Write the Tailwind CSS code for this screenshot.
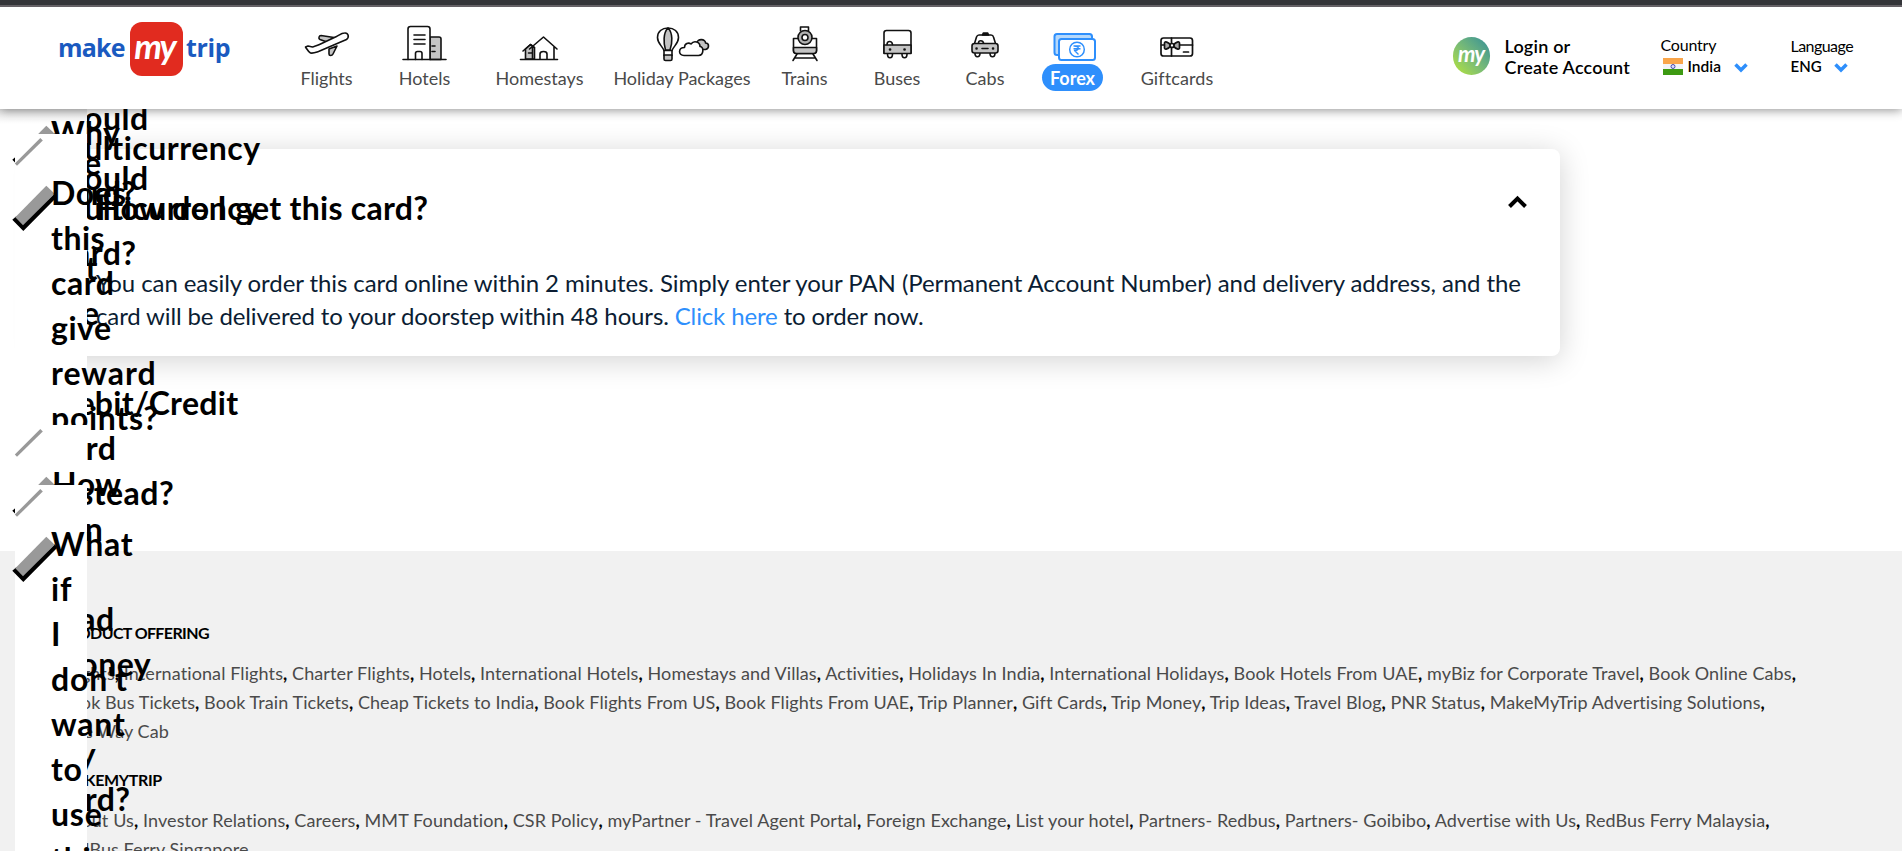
<!DOCTYPE html>
<html lang="en"><head><meta charset="utf-8"><title>MakeMyTrip Forex</title>
<script src="https://cdn.jsdelivr.net/npm/@tailwindcss/browser@4"></script></head>
<body class="font-['Lato',sans-serif] bg-white text-black">
<div class="relative w-[1902px] h-[851px] overflow-hidden">

<header class="relative z-30 h-[109px] bg-white border-t-5 border-[#343539] shadow-[0_1px_10px_rgba(0,0,0,0.45)]">
 <div class="h-[2px] bg-[#656166]"></div>
 <div class="flex h-[102px]">
  <div class="flex w-[240px] shrink-0 pl-[58px] pt-[15px] font-['Open_Sans',sans-serif] font-bold text-[25px] leading-[50px] text-[#1a5ac0]">
   <span class="w-[72px] tracking-[-0.8px]">make</span>
   <span class="w-[53px] h-[54px] rounded-[12px] bg-[#e12b1f] text-white text-center italic font-['Lato',sans-serif] text-[35px] leading-[46px] tracking-[-2px] pr-1">my</span>
   <span class="pl-[3px] tracking-[-0.4px]">trip</span>
  </div>
  <nav class="flex gap-[46px] pl-[60px] pt-[17px] text-[18px] text-[#4a4a4a] leading-[29px]">
   <div class="flex flex-col items-center w-[53px] whitespace-nowrap">
    <svg class="w-[46px] h-[40px] shrink-0" viewBox="304 24 46 40" fill="none" stroke="#111" stroke-width="1.6" stroke-linejoin="round" stroke-linecap="round"><path fill="#c4c4c4" d="M327 42l-7-2.500c-2-1-1-4 1-4l13 2zM329 49l8-3-4 8c-1 2-4 2-4 0z"/><path fill="#fff" d="M308 46l-2.500 1c2 3 3 5 5 6 3 .5 5-.5 8-1.500l28-12c3-2 2-7-2-6.500-3 0-5 2-8 3.500l-17 8c-2 1-4 1.500-7 2.500z"/></svg>
    <span>Flights</span></div>
   <div class="flex flex-col items-center w-[51px] whitespace-nowrap">
    <svg class="w-[46px] h-[40px] shrink-0" viewBox="402 24 46 40" fill="none" stroke="#111" stroke-width="1.6" stroke-linejoin="round" stroke-linecap="round"><path fill="#c4c4c4" d="M430 37h9q2 0 2 2v20.500h-11z"/><path fill="#fff" d="M408 59.500V29q0-2.500 2.500-2.500h17q2.500 0 2.500 2.500v30.500M415.500 59.500v-6q0-2 2-2h2.500q2 0 2 2v6"/><path d="M403 59.500h43M414 35h11M414 39.500h11M414 44h11M432 46h3M432 51.500h3"/></svg>
    <span>Hotels</span></div>
   <div class="flex flex-col items-center w-[87px] whitespace-nowrap">
    <svg class="w-[46px] h-[40px] shrink-0" viewBox="516.500 24 46 40" fill="none" stroke="#111" stroke-width="1.600" stroke-linejoin="round" stroke-linecap="round"><path fill="#c4c4c4" d="M525 59V49l5-4.500 4 3.500v11z"/><path d="M522.500 51l7.500-6.500 4 3M529 49l14-12 13.500 12M532 47v12M553.500 47v12.500M539.500 59v-5q0-2.500 3.500-2.500t3.500 2.500v5M528 53h3M520 59.500h37"/></svg>
    <span>Homestays</span></div>
   <div class="flex flex-col items-center w-[138px] -mx-4 whitespace-nowrap">
    <svg class="w-[56px] h-[40px] shrink-0" viewBox="654 24 56 40" fill="none" stroke="#111" stroke-width="1.6" stroke-linejoin="round" stroke-linecap="round"><path d="M664 50.500c-2-5-6.500-7-6.500-13 0-6 4.500-9.500 10.500-9.500s10.500 3.500 10.500 9.500c0 6-4.500 8-6.500 13z"/><path fill="#c4c4c4" d="M665.500 50c-2-7-2.500-17 2.500-22 5 5 4.500 15 2 22zM664 55h8v4q0 1.500-1.500 1.500h-5q-1.500 0-1.500-1.500zM697 43c0-5 9-4 8.500 0 4 0 4 5.500 0 6.500h-3z"/><path d="M664 50.500v5M672 50.500v5"/><path fill="#fff" d="M684 55.500c-6 0-6-8 .5-8 0-4 4-5.500 6.500-3.500 3-4 9-2 9 2.500 4 .5 4 9-1.500 9z"/></svg>
    <span>Holiday Packages</span></div>
   <div class="flex flex-col items-center w-[47px] whitespace-nowrap">
    <svg class="w-[46px] h-[40px] shrink-0" viewBox="781.500 24 46 40" fill="none" stroke="#111" stroke-width="1.6" stroke-linejoin="round" stroke-linecap="round"><path d="M800 31v-4h8v4M797 38.500h-4v12q0 3 3 3h17q3 0 3-3v-12h-4"/><path fill="#c4c4c4" d="M793 47.500h23v3q0 3-3 3h-17q-3 0-3-3z"/><circle cx="804.500" cy="37.500" r="7" fill="#b0b0b0"/><circle cx="804.500" cy="37.500" r="3" fill="#fff"/><path d="M796.500 54l-4 6.500M812.500 54l4 6.500M795 58h19"/></svg>
    <span>Trains</span></div>
   <div class="flex flex-col items-center w-[46px] whitespace-nowrap">
    <svg class="w-[46px] h-[40px] shrink-0" viewBox="874 24 46 40" fill="none" stroke="#111" stroke-width="1.6" stroke-linejoin="round" stroke-linecap="round"><path fill="#fff" d="M887.500 54c0 5 5 5 5 0M902 54c0 5 5 5 5 0M884 53V33q0-2.500 2.500-2.500h22q2.500 0 2.500 2.500v20z"/><path fill="#c4c4c4" d="M884 45h27v8.500h-27z"/><path d="M887 44.500c0-4 5-4 5.500 0"/><path stroke-width="2.600" d="M890 49.500h.1M904.500 49.500h.1"/></svg>
    <span>Buses</span></div>
   <div class="flex flex-col items-center w-[38px] whitespace-nowrap">
    <svg class="w-[38px] h-[40px] shrink-0" viewBox="966.500 24 38 40" fill="none" stroke="#111" stroke-width="1.600" stroke-linejoin="round" stroke-linecap="round"><path fill="#fff" d="M975.500 53c-.5 5 5 5 5 0M990.500 53c0 5 5 5 5 0M975 43.500l2-6.500q.7-2 2.500-2h12q2 0 2.500 2l2 6.500"/><path fill="#c4c4c4" d="M975 43.500h21q2.500 0 2.500 2.500v4.500q0 2.500-2.500 2.500h-21q-2.500 0-2.500-2.500V46q0-2.500 2.500-2.500z"/><path d="M979 43c0-3 4.500-3 5 0M982.500 48.500h6"/><path stroke-width="2.500" d="M977 48.500h.1M993.500 48.500h.1"/><path fill="#111" d="M983 35l.8-2h4.400l.8 2z"/></svg>
    <span>Cabs</span></div>
   <div class="flex flex-col items-center w-[61px] -mx-2 whitespace-nowrap">
    <svg class="w-[46px] h-[40px] shrink-0" viewBox="1048.500 24 46 40" fill="none" stroke="#2e8ffc" stroke-width="2" stroke-linejoin="round"><rect x="1053" y="34" width="37.500" height="21" rx="2.500" fill="#b5d8fb"/><rect x="1057.500" y="39" width="36" height="21" rx="2.500" fill="#fff"/><circle cx="1075.500" cy="49.500" r="7.300" stroke-width="1.500"/><path stroke-width="1.400" d="M1072 46h7M1072 48.700h7M1073 46c5 0 5 4.500 0 4.500l4 4"/></svg>
    <span class="w-[61px] h-[27px] rounded-full bg-[#2e8ffc] text-white font-bold text-center text-[18px] leading-[29px]">Forex</span></div>
   <div class="flex flex-col items-center w-[72px] whitespace-nowrap">
    <svg class="w-[46px] h-[40px] shrink-0" viewBox="1153.500 24 46 40" fill="none" stroke="#111" stroke-width="1.700" stroke-linejoin="round" stroke-linecap="round"><rect x="1160.500" y="38" width="31.500" height="18" rx="2.500"/><path d="M1171 38v18M1161 45h31M1183 52h5"/><path fill="#a8a8a8" d="M1170 45c-2-3-6-4-6-2v5c0 2 4 1 6-2zM1173 45c2-3 6-4 6-2v5c0 2-4 1-6-2z"/><circle cx="1171.500" cy="45.500" r="2" fill="#fff"/></svg>
    <span class="tracking-[0.100px]">Giftcards</span></div>
  </nav>
  <div class="flex ml-auto mr-[48.500px]">
   <div class="mt-[30px] w-[37px] h-[38px] rounded-full bg-linear-to-tr from-[#a4d84a] from-15% to-[#2f8d96] text-white italic font-bold text-[22px] leading-[34px] text-center tracking-[-1px]">my</div>
   <div class="ml-[15px] mt-[29px] w-[156px] text-[18px] leading-[21px] font-semibold tracking-[0.2px] whitespace-nowrap">Login or<br>Create Account</div>
   <div class="w-[130px] mt-[27px] text-[16px]">
    <div class="leading-[21px] tracking-[-0.2px]">Country</div>
    <div class="flex items-center leading-[22px] font-semibold"><svg class="ml-[2px] mr-[5px] w-[20px] h-[17px]" viewBox="0 0 20 17"><path fill="#f9a54a" d="M0 0h20v6H0z"/><path fill="#f3f3f8" d="M0 6h20v5H0z"/><path fill="#3d9a12" d="M0 11h20v6H0z"/><circle cx="10" cy="8.500" r="2" fill="#ddf" stroke="#4a4aa8"/></svg><span class="w-[46px] text-[15.500px]">India</span><svg class="w-[14px] h-[10px] mt-1" viewBox="0 0 14 10" fill="none" stroke="#2e8ffc" stroke-width="3.500"><path d="M1.500 1.500L7 7l5.500-5.500"/></svg></div>
   </div>
   <div class="w-[63px] mt-[28px] text-[16px]">
    <div class="leading-[21px] tracking-[-0.55px]">Language</div>
    <div class="flex items-center leading-[20px] font-semibold"><span class="w-[43px] text-[15px]">ENG</span><svg class="w-[14px] h-[10px] mt-1" viewBox="0 0 14 10" fill="none" stroke="#2e8ffc" stroke-width="3.500"><path d="M1.500 1.500L7 7l5.500-5.500"/></svg></div>
   </div>
  </div>
 </div>
</header>

<main class="h-[442px] pt-[40px]">
 <section class="ml-[42px] w-[1518px] h-[207px] rounded-[8px] bg-white shadow-[0_4px_30px_rgba(0,0,0,0.18)] pl-[54px] pr-[33px] pt-[36px]">
  <div class="flex justify-between h-[68px]">
   <h2 class="text-[32px] leading-[45px] font-bold tracking-[0.28px]">How do I get this card?</h2>
   <svg class="w-[20px] h-[14px] mt-[10px]" viewBox="0 0 20 14" fill="none" stroke="#000" stroke-width="4"><path d="M2.500 11.500L10.500 3.500l8 8"/></svg>
  </div>
  <p class="pt-[13px] text-[24px] leading-[33px] text-[#0b1d33] whitespace-nowrap tracking-[-0.08px]">You can easily order this card online within 2 minutes. Simply enter your PAN (Permanent Account Number) and delivery address, and the<br><span class="tracking-[-0.13px]">card will be delivered to your doorstep within 48 hours. <a class="text-[#2e8ffc]">Click here</a> to order now.</span></p>
 </section>
</main>

<footer class="h-[300px] bg-[#f1f1f1] pl-[59px] pt-[70px] text-[18px] leading-[29px] whitespace-nowrap text-[#4a4a4a] tracking-[0.08px]">
 <h3 class="text-[16px] leading-[24px] font-bold text-black tracking-[-0.62px]">PRODUCT OFFERING</h3>
 <p class="pt-[14px] pl-[3px] tracking-[0.1px]">Flights<b class="text-black">,</b> International Flights<b class="text-black">,</b> Charter Flights<b class="text-black">,</b> Hotels<b class="text-black">,</b> International Hotels<b class="text-black">,</b> Homestays and Villas<b class="text-black">,</b> Activities<b class="text-black">,</b> Holidays In India<b class="text-black">,</b> International Holidays<b class="text-black">,</b> Book Hotels From UAE<b class="text-black">,</b> myBiz for Corporate Travel<b class="text-black">,</b> Book Online Cabs<b class="text-black">,</b></p>
 <p>Book Bus Tickets<b class="text-black">,</b> Book Train Tickets<b class="text-black">,</b> Cheap Tickets to India<b class="text-black">,</b> Book Flights From US<b class="text-black">,</b> Book Flights From UAE<b class="text-black">,</b> Trip Planner<b class="text-black">,</b> Gift Cards<b class="text-black">,</b> Trip Money<b class="text-black">,</b> Trip Ideas<b class="text-black">,</b> Travel Blog<b class="text-black">,</b> PNR Status<b class="text-black">,</b> MakeMyTrip Advertising Solutions<b class="text-black">,</b></p>
 <p>One Way Cab</p>
 <h3 class="mt-[22px] text-[16px] leading-[24px] font-bold text-black tracking-[-0.35px]">MAKEMYTRIP</h3>
 <p class="pt-[14px] tracking-[0.1px]">About Us<b class="text-black">,</b> Investor Relations<b class="text-black">,</b> Careers<b class="text-black">,</b> MMT Foundation<b class="text-black">,</b> CSR Policy<b class="text-black">,</b> myPartner - Travel Agent Portal<b class="text-black">,</b> Foreign Exchange<b class="text-black">,</b> List your hotel<b class="text-black">,</b> Partners- Redbus<b class="text-black">,</b> Partners- Goibibo<b class="text-black">,</b> Advertise with Us<b class="text-black">,</b> RedBus Ferry Malaysia<b class="text-black">,</b></p>
 <p>RedBus Ferry Singapore</p>
</footer>

<!-- Collapsed FAQ panels stacked over the page; each question overflows its narrow panel -->
<div class="absolute inset-0 z-10 text-[32px] leading-[45px] font-bold tracking-[0.5px]">
 <div class="absolute left-[51px] top-[95px]">should<br>use<br><span class="pl-[6px]">multicurrency</span><br><span class="pl-[7px]">card?</span></div>
 <div class="absolute left-[51px] top-[125px]"><span class="pl-[6px]">multicurrency</span><br><span class="pl-[7px]">card?</span></div>
 <div class="absolute left-[51px] top-[110px]">Why<br>should<br>I<br>get<br>the<br>of<br><span class="pl-[2px] tracking-[0.3px]">Debit/Credit</span><br><span class="pl-[2px]">card</span><br><span class="pl-[1px]">instead?</span></div>
 <div class="absolute left-[15px] top-[109px] w-[72px] h-[742px] bg-white"></div>
 <div class="absolute left-0 top-[109px] w-[87px] h-[25px] overflow-hidden bg-linear-to-b from-black/10 to-transparent to-60%"><span class="absolute left-[51px] top-[1px]">Why</span></div>
 <svg class="absolute left-0 top-[120px] w-[60px] h-[60px]" viewBox="0 180 60 60"><path fill="#000" d="M12.300 219.700l4-3.500L23 223l32-30 2 4-33.700 34z"/><path fill="#999" d="M46.300 185.700l8.400 8L23 225.300l-7.700-8z"/></svg>
 <div class="absolute left-[15px] top-[134px] w-[72px] h-[717px] bg-white"></div>
 <svg class="absolute left-0 top-[130px] w-[60px] h-[40px]" viewBox="0 130 60 40"><path fill="#999" d="M40.300 138l2.500 2.500L17 165.800l-2.200-2.200z"/></svg>
 <svg class="absolute left-0 top-[180px] w-[60px] h-[60px]" viewBox="0 180 60 60"><path fill="#000" d="M12.300 219.700l4-3.500L23 223l32-30 2 4-33.700 34z"/><path fill="#999" d="M46.300 185.700l8.400 8L23 225.300l-7.700-8z"/></svg>
 <div class="absolute left-[51px] top-[170px]">Does<br>this<br>card<br>give<br><span class="tracking-[1px]">reward</span><br><span class="tracking-[0.7px]">points?</span></div>
 <div class="absolute left-[15px] top-[425px] w-[72px] h-[426px] bg-white"></div>
 <svg class="absolute left-0 top-[421px] w-[60px] h-[40px]" viewBox="0 130 60 40"><path fill="#999" d="M40.300 138l2.500 2.500L17 165.800l-2.200-2.200z"/></svg>
 <svg class="absolute left-0 top-[471px] w-[60px] h-[60px]" viewBox="0 180 60 60"><path fill="#000" d="M12.300 219.700l4-3.500L23 223l32-30 2 4-33.700 34z"/><path fill="#999" d="M46.300 185.700l8.400 8L23 225.300l-7.700-8z"/></svg>
 <div class="absolute left-[52px] top-[461px]">How<br>can<br>I<br>load<br>money<br>to<br>my<br>card?</div>
 <div class="absolute left-[15px] top-[485px] w-[72px] h-[366px] bg-white"></div>
 <svg class="absolute left-0 top-[481px] w-[60px] h-[40px]" viewBox="0 130 60 40"><path fill="#999" d="M40.300 138l2.500 2.500L17 165.800l-2.200-2.200z"/></svg>
 <svg class="absolute left-0 top-[531px] w-[60px] h-[60px]" viewBox="0 180 60 60"><path fill="#000" d="M12.300 219.700l4-3.500L23 223l32-30 2 4-33.700 34z"/><path fill="#999" d="M46.300 185.700l8.400 8L23 225.300l-7.700-8z"/></svg>
 <div class="absolute left-[51px] top-[521px] tracking-[0.8px]">What<br>if<br>I<br>don't<br>want<br>to<br>use<br>this</div>
</div>
</div>
</body></html>
